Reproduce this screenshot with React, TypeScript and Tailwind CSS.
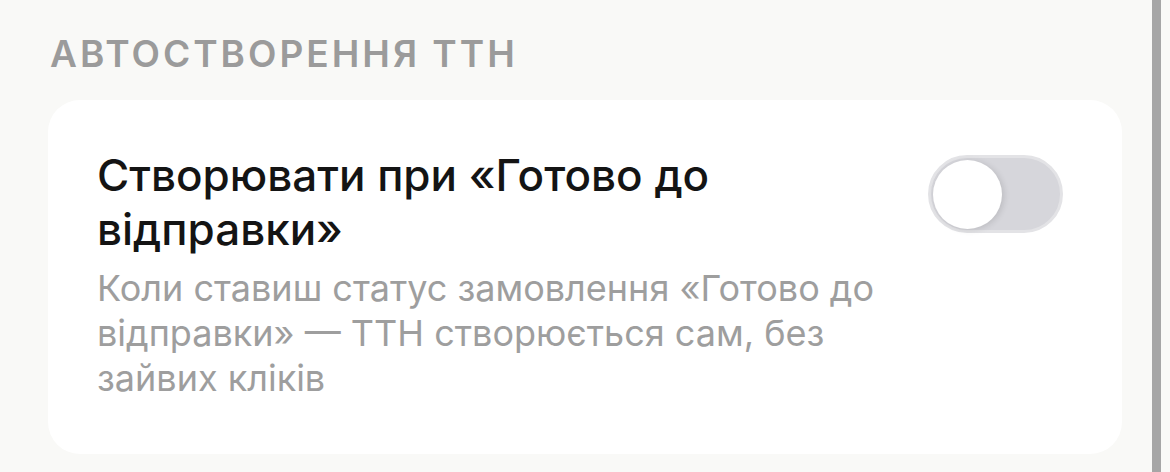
import React, { useState } from 'react';

const Toggle: React.FC<{ on: boolean; onChange: (v: boolean) => void }> = ({ on, onChange }) => (
  <button
    onClick={() => onChange(!on)}
    className={`relative w-[135px] h-[78px] shrink-0 rounded-full border-[3px] transition-colors ${
      on ? 'bg-[#34c759] border-[#34c759]' : 'bg-[#d6d6db] border-[#e3e3e6]'
    }`}
  >
    <span
      className={`absolute top-[2px] w-[69px] h-[69px] rounded-full bg-white shadow-[2px_1px_6px_rgba(0,0,0,0.12)] transition-all ${
        on ? 'left-[58px]' : 'left-[2px]'
      }`}
    />
  </button>
);

export default function App() {
  const [autoCreate, setAutoCreate] = useState(false);

  return (
    <div className="flex h-[472px] w-full bg-[#f9f9f7] font-['Inter',sans-serif]">
      <div className="flex-1 pl-[48px] pr-[30px] pt-[30px]">
        <h3 className="pl-[2px] text-[37px] leading-[48px] font-semibold tracking-[3px] text-[#9b9b9b] uppercase">
          Автостворення ТТН
        </h3>

        {/* Settings card */}
        <div className="mt-[22px] flex items-start rounded-[32px] bg-white pl-[49px] pr-[59px] pt-[48px] pb-[53px]">
          <div className="w-[800px]">
            <div className="text-[44px] leading-[54px] font-medium text-[#141414]">
              Створювати при «Готово до відправки»
            </div>
            <div className="mt-[10px] text-[36px] leading-[45px] text-[#9e9e9e]">
              Коли ставиш статус замовлення «Готово до відправки» — ТТН створюється сам, без зайвих кліків
            </div>
          </div>
          <div className="ml-auto mt-[7px]">
            <Toggle on={autoCreate} onChange={setAutoCreate} />
          </div>
        </div>
      </div>

      {/* scroll indicator */}
      <div className="w-[9px] bg-[#a6a6a6]" />
      <div className="w-[9px]" />
    </div>
  );
}
